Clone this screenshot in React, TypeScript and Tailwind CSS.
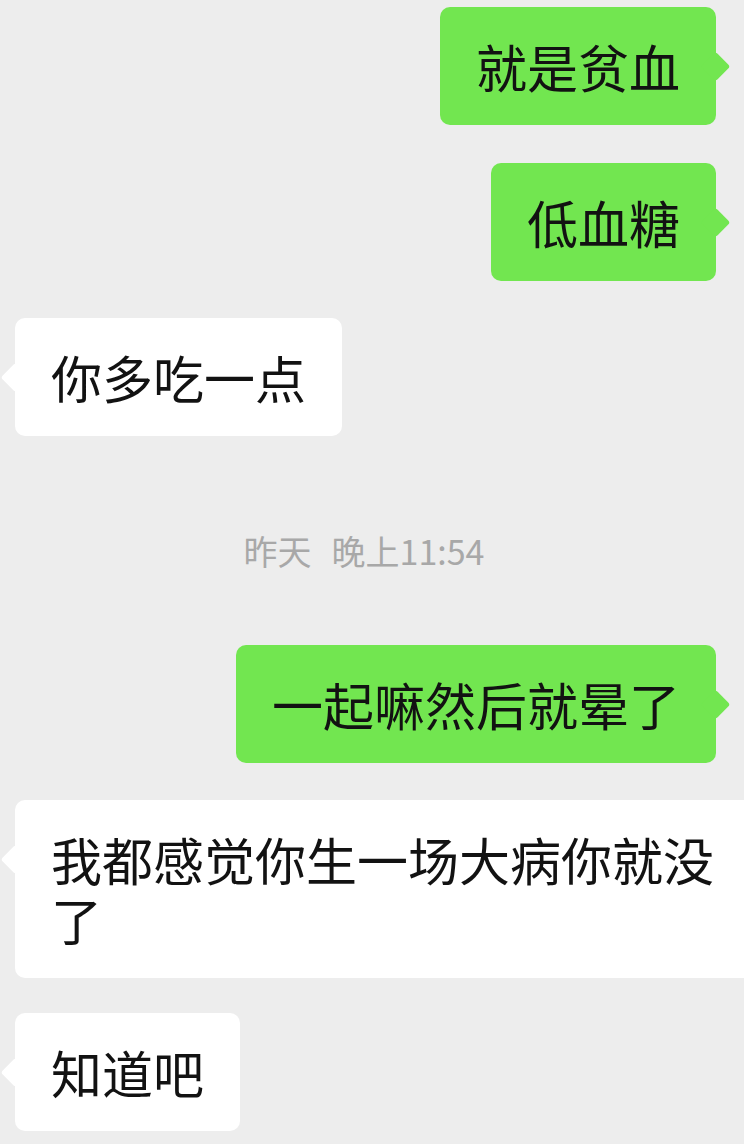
import React from 'react';

type Side = 'left' | 'right';

interface Message {
    id: number;
    side: Side;
    text: string;
}

const font = { fontFamily: '"Noto Sans CJK SC", "Noto Sans", sans-serif' };

const Bubble: React.FC<{ side: Side; text: string; className?: string }> = ({ side, text, className = '' }) => {
    const isMe = side === 'right';
    return (
        <div
            className={`relative rounded-[10px] px-[36px] py-[29px] text-[51px] leading-[60px] text-[#121212] ${
                isMe ? 'bg-[#72e650]' : 'bg-white'
            } ${className}`}
        >
            {/* little tail pointing at the avatar side */}
            <span
                className={`absolute top-[49px] h-[21px] w-[21px] rotate-45 rounded-[3px] ${
                    isMe ? 'right-[-10px] bg-[#72e650]' : 'left-[-10px] bg-white'
                }`}
            />
            <span className="relative">{text}</span>
        </div>
    );
};

const Row: React.FC<{ msg: Message; className?: string; bubbleClass?: string }> = ({ msg, className = '', bubbleClass }) => (
    <div className={`flex ${msg.side === 'right' ? 'justify-end pr-[28px]' : 'justify-start pl-[15px]'} ${className}`}>
        <Bubble side={msg.side} text={msg.text} className={bubbleClass} />
    </div>
);

export default function App() {
    return (
        <div className="h-[1144px] w-[744px] overflow-hidden bg-[#ededed] pt-[7px]" style={font}>
            <div className="flex flex-col">
                <Row msg={{ id: 1, side: 'right', text: '就是贫血' }} />
                <Row msg={{ id: 2, side: 'right', text: '低血糖' }} className="mt-[38px]" />
                <Row msg={{ id: 3, side: 'left', text: '你多吃一点' }} className="mt-[37px]" />

                <div className="mt-[95px] mb-[74px] flex justify-center pr-[16px] text-[34px] leading-[40px] text-[#a8a8a8]">
                    <span>昨天</span>
                    <span className="ml-[20px]">晚上11:54</span>
                </div>

                <Row msg={{ id: 4, side: 'right', text: '一起嘛然后就晕了' }} />
                <Row
                    msg={{ id: 5, side: 'left', text: '我都感觉你生一场大病你就没了' }}
                    className="mt-[37px]"
                    bubbleClass="w-[745px] shrink-0 !pr-[20px]"
                />
                <Row msg={{ id: 6, side: 'left', text: '知道吧' }} className="mt-[35px]" />
            </div>
        </div>
    );
}
